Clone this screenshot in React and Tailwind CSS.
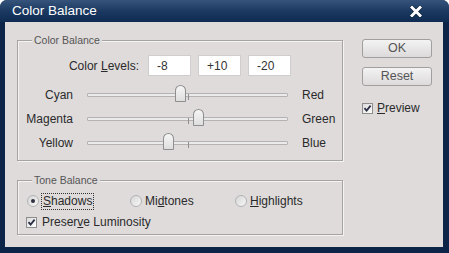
import React from 'react';

const BODY = 'bg-[#dfdbdb]';

const sliders = [
    { left: 'Cyan', right: 'Red', value: -8 },
    { left: 'Magenta', right: 'Green', value: 10 },
    { left: 'Yellow', right: 'Blue', value: -20 },
];

const CheckBox = () => (
    <span className="w-[11px] h-[11px] border border-[#8d8d8d] bg-gradient-to-br from-[#dcdcdc] to-[#ffffff] flex items-center justify-center shrink-0">
        <svg width="9" height="9" viewBox="0 0 9 9">
            <path d="M1.5 4.2 L3.6 6.6 L7.6 1.6" fill="none" stroke="#2b2f45" strokeWidth="1.8" />
        </svg>
    </span>
);

const Radio = ({ checked }) => (
    <span className="w-[12px] h-[12px] rounded-full border border-[#b3b3b3] bg-gradient-to-br from-[#d8d6d6] to-[#f7f7f7] flex items-center justify-center shrink-0">
        {checked && <span className="w-[4px] h-[4px] rounded-full bg-[#303040]" />}
    </span>
);

const Slider = ({ value }) => (
    <div className="relative w-[201px] h-[4px] border border-[#b4b2b2] bg-[#ecebeb] rounded-[1px]">
        <span className="absolute left-[100px] top-[0px] w-[1px] h-[6px] bg-[#8e8e8e]" />
        <span
            className="absolute top-[-9px] w-[11px] h-[17px] rounded-t-[6px] rounded-b-[1px] border border-[#8f8f8f] bg-gradient-to-b from-[#f6f6f6] to-[#dedede]"
            style={{ left: 95 + value }}
        />
    </div>
);

const Group = ({ title, className, children }) => (
    <div className={`relative w-[326px] border border-[#a6a3a3] shadow-[inset_1px_1px_0_#f4f2f2,1px_1px_0_#f4f2f2] ${className}`}>
        <span className={`absolute left-[14px] top-[-8px] px-[2px] ${BODY} text-[10.5px] text-[#555] leading-[14px]`}>{title}</span>
        {children}
    </div>
);

const Button = ({ children, className = '' }) => (
    <button className={`w-[70px] h-[19px] rounded-[3px] border border-[#a09e9e] bg-gradient-to-b from-[#f4f3f3] to-[#dcdada] text-[#555] text-[12.5px] leading-none ${className}`}>
        {children}
    </button>
);

export default function App() {
    return (
        <div className="w-[449px] h-[253px] bg-[#0b2448] rounded-t-[7px] flex flex-col font-['Liberation_Sans',Arial,sans-serif] text-[12px] text-[#2a2a2a]">
            {/* title bar */}
            <div className="h-[22px] shrink-0 rounded-t-[7px] bg-gradient-to-b from-[#36547c] via-[#1b3961] to-[#0f2b52] flex items-center justify-between pl-[12px] pr-[27px]">
                <span className="text-white text-[13.5px] leading-none">Color Balance</span>
                <svg width="12" height="11" viewBox="0 0 12 11">
                    <path d="M2 1.5 L10 9.5 M10 1.5 L2 9.5" stroke="#0a1d3a" strokeWidth="4.4" strokeLinecap="square" />
                    <path d="M2 1.5 L10 9.5 M10 1.5 L2 9.5" stroke="#ffffff" strokeWidth="3" strokeLinecap="square" />
                </svg>
            </div>

            {/* body */}
            <div className={`ml-[5px] mr-[6px] mb-[6px] flex-1 ${BODY} flex pl-[12px] pt-[17px]`}>
                <div className="flex flex-col">
                    <Group title="Color Balance" className="h-[121px] mt-[1px]">
                        <div className="flex items-center h-[21px] mt-[14px]">
                            <span className="w-[121px] text-right">Color <u>L</u>evels:</span>
                            <div className="flex gap-[7px] ml-[9px]">
                                {['-8', '+10', '-20'].map((v) => (
                                    <span key={v} className="w-[43px] h-[21px] bg-white border border-[#cfcdcd] flex items-center pl-[8px] text-[#333]">{v}</span>
                                ))}
                            </div>
                        </div>
                        <div className="mt-[7px] flex flex-col">
                            {sliders.map((s) => (
                                <div key={s.left} className="flex items-center h-[24px]">
                                    <span className="w-[55px] text-right">{s.left}</span>
                                    <div className="ml-[14px]"><Slider value={s.value} /></div>
                                    <span className="ml-[14px]">{s.right}</span>
                                </div>
                            ))}
                        </div>
                    </Group>

                    <Group title="Tone Balance" className="h-[55px] mt-[19px]">
                        <div className="flex items-center h-[16px] mt-[12px] pl-[9px]">
                            <div className="w-[103px] flex items-center gap-[3px]">
                                <Radio checked />
                                <span className="outline outline-1 outline-dotted outline-[#333] px-[1px] leading-[15px]"><u>S</u>hadows</span>
                            </div>
                            <div className="w-[105px] flex items-center gap-[3px]">
                                <Radio />
                                <span>Mi<u>d</u>tones</span>
                            </div>
                            <div className="flex items-center gap-[3px]">
                                <Radio />
                                <span><u>H</u>ighlights</span>
                            </div>
                        </div>
                        <div className="flex items-center h-[16px] mt-[5px] pl-[8px] gap-[5px]">
                            <CheckBox />
                            <span>Preser<u>v</u>e Luminosity</span>
                        </div>
                    </Group>
                </div>

                <div className="ml-[19px] flex flex-col">
                    <Button>OK</Button>
                    <Button className="mt-[9px]">Reset</Button>
                    <div className="flex items-center h-[14px] mt-[15px] gap-[4px]">
                        <CheckBox />
                        <span><u>P</u>review</span>
                    </div>
                </div>
            </div>
        </div>
    );
}
